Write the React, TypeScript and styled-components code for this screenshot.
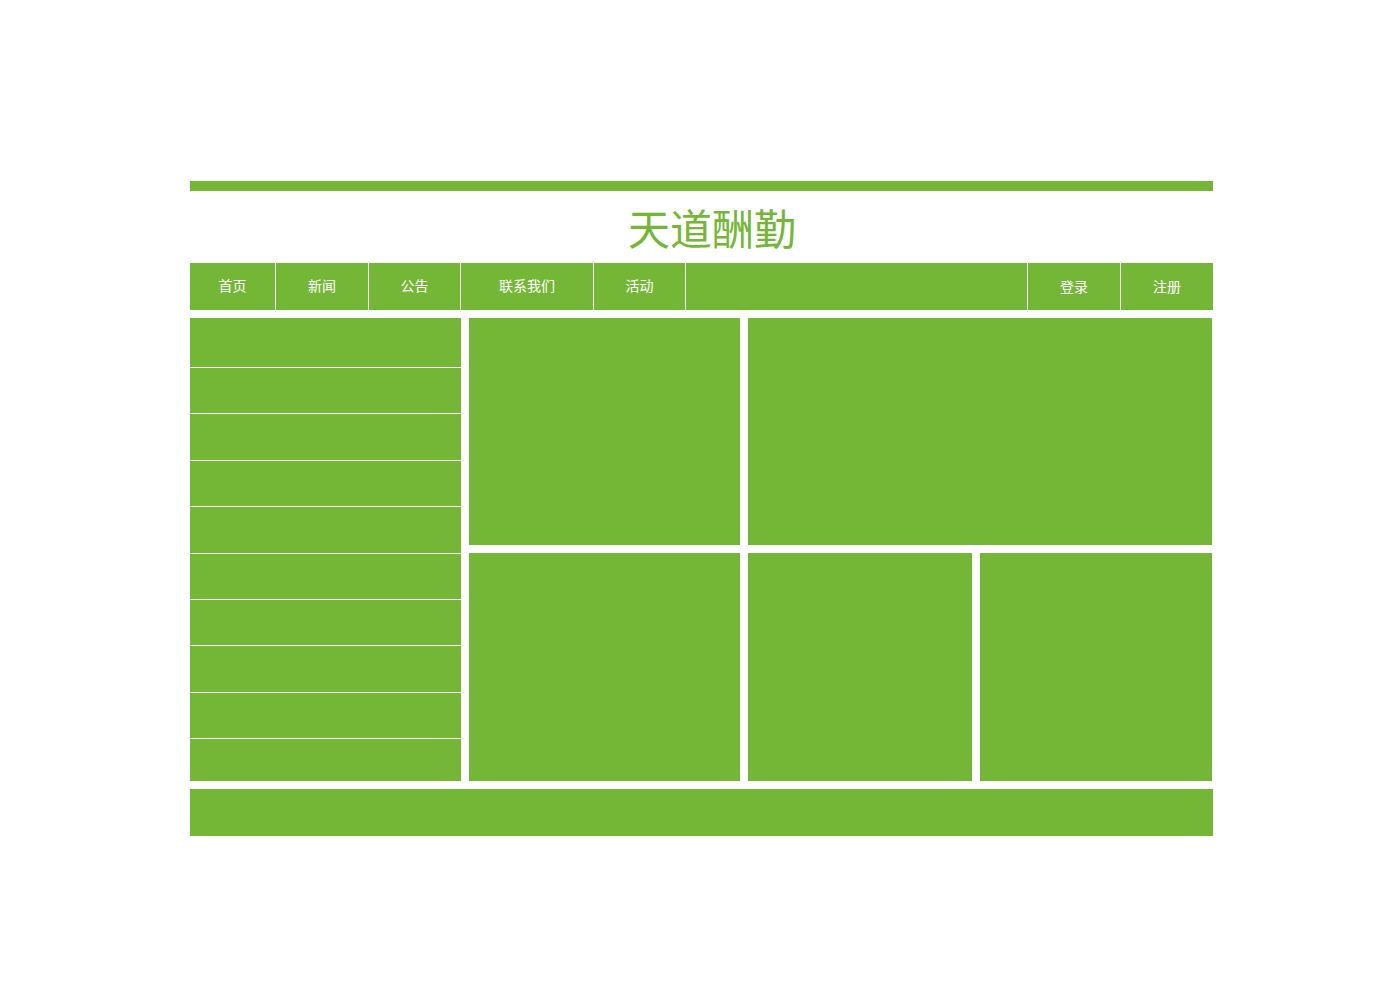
import React from "react";
import styled, { createGlobalStyle } from "styled-components";

const GREEN = "#74b737";

const GlobalStyle = createGlobalStyle`
  html, body {
    margin: 0;
    padding: 0;
    background: #fff;
    font-family: "Noto Sans CJK SC", "Noto Sans", sans-serif;
  }
`;

const NAV_LEFT = [
  { label: "首页", width: 86 },
  { label: "新闻", width: 93 },
  { label: "公告", width: 92 },
  { label: "联系我们", width: 133 },
  { label: "活动", width: 92 },
];

const NAV_RIGHT = [
  { label: "登录", width: 93 },
  { label: "注册", width: 92 },
];

const SIDE_ROWS = [49, 46.4, 46.4, 46.4, 46.4, 46.4, 46.4, 46.4, 46.4];

export default function App() {
  return (
    <>
      <GlobalStyle />
      <Page>
        <TopBar />
        <Header>
          <Title>天道酬勤</Title>
        </Header>
        <Nav>
          {NAV_LEFT.map((item) => (
            <NavItem key={item.label} $width={item.width} $lift={4}>
              {item.label}
            </NavItem>
          ))}
          <NavSpacer />
          {NAV_RIGHT.map((item, i) => (
            <NavItem
              key={item.label}
              $width={item.width}
              $last={i === NAV_RIGHT.length - 1}
              $lift={2}
            >
              {item.label}
            </NavItem>
          ))}
        </Nav>
        <Main>
          <SideList>
            {SIDE_ROWS.map((h, i) => (
              <SideRow key={i} $height={h} $first={i === 0} />
            ))}
            <SideRow $grow />
          </SideList>
          <Panel />
          <Panel />
          <Panel />
          <BottomRight>
            <Panel />
            <Panel />
          </BottomRight>
        </Main>
        <Footer />
      </Page>
    </>
  );
}

const Page = styled.div`
  width: 1023px;
  margin: 181px 0 0 190px;
  display: flex;
  flex-direction: column;
`;

const TopBar = styled.div`
  height: 10px;
  background: ${GREEN};
`;

const Header = styled.div`
  height: 72px;
  display: flex;
  align-items: center;
  justify-content: center;
  padding-left: 21px;
`;

const Title = styled.h1`
  margin: 0;
  font-size: 42px;
  font-weight: normal;
  line-height: 1;
  color: ${GREEN};
`;

const Nav = styled.div`
  width: 1023px;
  height: 47px;
  display: flex;
  background: ${GREEN};
`;

const NavItem = styled.div<{ $width: number; $last?: boolean; $lift: number }>`
  box-sizing: border-box;
  width: ${({ $width }) => $width}px;
  height: 100%;
  display: flex;
  align-items: center;
  justify-content: center;
  padding-bottom: ${({ $lift }) => $lift}px;
  border-right: ${({ $last }) => ($last ? "none" : "1px solid #fff")};
  color: #fff;
  font-size: 14px;
`;

const NavSpacer = styled.div`
  flex: 1;
  border-right: 1px solid #fff;
`;

const Main = styled.div`
  width: 1022px;
  margin-top: 8px;
  display: grid;
  grid-template-columns: 271px 271px 1fr;
  grid-template-rows: 227px 228px;
  gap: 8px;
`;

const SideList = styled.div`
  grid-row: 1 / span 2;
  display: flex;
  flex-direction: column;
`;

const SideRow = styled.div<{ $height?: number; $first?: boolean; $grow?: boolean }>`
  box-sizing: border-box;
  flex: ${({ $grow }) => ($grow ? 1 : "none")};
  height: ${({ $height }) => ($height ? `${$height}px` : "auto")};
  background: ${GREEN};
  border-top: ${({ $first }) => ($first ? "none" : "1px solid #fff")};
`;

const Panel = styled.div`
  background: ${GREEN};
`;

const BottomRight = styled.div`
  display: grid;
  grid-template-columns: 224px 1fr;
  gap: 8px;
`;

const Footer = styled.div`
  height: 47px;
  margin-top: 8px;
  background: ${GREEN};
`;
